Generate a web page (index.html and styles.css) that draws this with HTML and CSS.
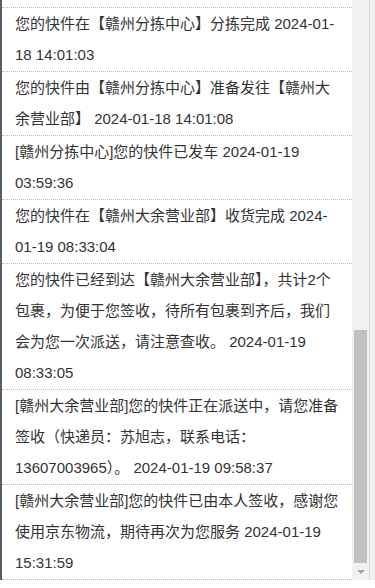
FILE: index.html
```
<!DOCTYPE html>
<html lang="zh-CN">
<head>
<meta charset="utf-8">
<title>物流轨迹</title>
<link rel="stylesheet" href="styles.css">
</head>
<body>
<div class="frame">
  <div class="panel">
    <ul class="track">
      <li class="step">您的快件在【赣州分拣中心】分拣完成 2024-01-18 14:01:03</li>
      <li class="step">您的快件由【赣州分拣中心】准备发往【赣州大余营业部】 2024-01-18 14:01:08</li>
      <li class="step">[赣州分拣中心]您的快件已发车 2024-01-19 03:59:36</li>
      <li class="step">您的快件在【赣州大余营业部】收货完成 2024-01-19 08:33:04</li>
      <li class="step">您的快件已经到达【赣州大余营业部】，共计2个包裹，为便于您签收，待所有包裹到齐后，我们会为您一次派送，请注意查收。 2024-01-19 08:33:05</li>
      <li class="step">[赣州大余营业部]您的快件正在派送中，请您准备签收（快递员：苏旭志，联系电话：13607003965）。 2024-01-19 09:58:37</li>
      <li class="step">[赣州大余营业部]您的快件已由本人签收，感谢您使用京东物流，期待再次为您服务 2024-01-19 15:31:59</li>
    </ul>
  </div>
  <div class="scrollbar">
    <div class="scroll-track"></div>
    <div class="scroll-thumb"></div>
    <div class="scroll-btn"><span class="arrow-down"></span></div>
  </div>
  <div class="edge"></div>
</div>
</body>
</html>
```

FILE: styles.css
```
html, body {
  margin: 0;
  padding: 0;
  background: #ffffff;
}

body {
  font-family: "Liberation Sans", "Noto Sans CJK SC", sans-serif;
  font-size: 15px;
  color: #333333;
}

.frame {
  display: flex;
  height: 580px;
  width: 375px;
}

.panel {
  width: 350px;
  border-left: 2px solid #555d66;
  background: #ffffff;
  display: flex;
  flex-direction: column;
  justify-content: flex-end;
  overflow: hidden;
}

.track {
  list-style: none;
  margin: 0;
  padding: 0;
  border-bottom: 1px dotted #bbbbbb;
}

.step {
  border-top: 1px dotted #bbbbbb;
  padding: 0 12px 1px 13px;
  line-height: 31px;
}

.scrollbar {
  width: 17px;
  background: #f1f1f1;
  display: flex;
  flex-direction: column;
}

.scroll-track {
  flex: 1;
}

.scroll-thumb {
  height: 233px;
  margin: 0 2px;
  background: #c1c1c1;
}

.scroll-btn {
  height: 17px;
  display: flex;
  align-items: center;
  justify-content: center;
}

.arrow-down {
  width: 0;
  height: 0;
  border-left: 4px solid transparent;
  border-right: 4px solid transparent;
  border-top: 4px solid #a3a3a3;
}

.edge {
  flex: 1;
  border-left: 1px solid #d4d4d4;
  background: #f0f0f0;
}
```
